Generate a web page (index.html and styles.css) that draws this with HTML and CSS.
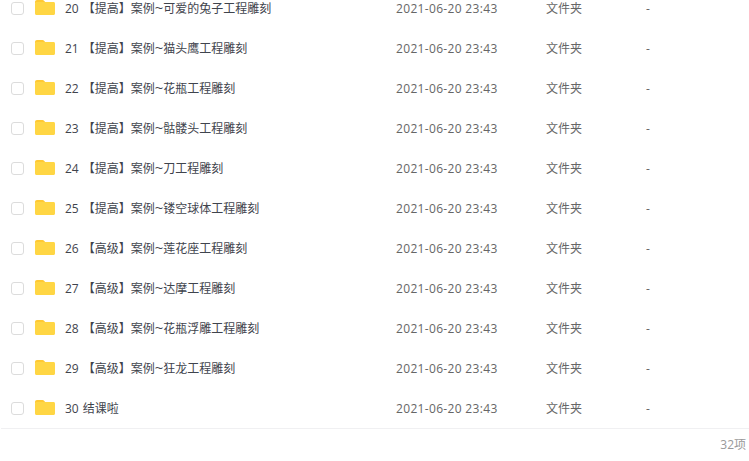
FILE: index.html
```html
<!DOCTYPE html>
<html lang="zh-CN">
<head>
    <meta charset="UTF-8">
    <meta name="viewport" content="width=device-width, initial-scale=1.0">
    <title>文件列表</title>
    <link rel="stylesheet" href="styles.css">
</head>
<body>
    <svg class="sprite" width="0" height="0">
        <symbol id="folder" viewBox="0 0 20 15">
            <path fill="#ffc933" d="M0 2C0 .8.8 0 2 0h5.500c.7 0 1.200.3 1.600.8L11 3H0z"/>
            <path fill="#ffd644" d="M0 3.500c0-.8.6-1.500 1.500-1.500h17c.9 0 1.500.7 1.500 1.500v10c0 .9-.6 1.500-1.500 1.500h-17C.6 15 0 14.400 0 13.500z"/>
        </symbol>
    </svg>

    <div class="list">
        <div class="row"><span class="check"></span><svg class="folder"><use href="#folder"/></svg><span class="name"><span class="num">20</span>【提高】案例<span class="tilde">~</span>可爱的兔子工程雕刻</span><span class="date">2021-06-20 23:43</span><span class="type">文件夹</span><span class="size">-</span></div>
        <div class="row"><span class="check"></span><svg class="folder"><use href="#folder"/></svg><span class="name"><span class="num">21</span>【提高】案例<span class="tilde">~</span>猫头鹰工程雕刻</span><span class="date">2021-06-20 23:43</span><span class="type">文件夹</span><span class="size">-</span></div>
        <div class="row"><span class="check"></span><svg class="folder"><use href="#folder"/></svg><span class="name"><span class="num">22</span>【提高】案例<span class="tilde">~</span>花瓶工程雕刻</span><span class="date">2021-06-20 23:43</span><span class="type">文件夹</span><span class="size">-</span></div>
        <div class="row"><span class="check"></span><svg class="folder"><use href="#folder"/></svg><span class="name"><span class="num">23</span>【提高】案例<span class="tilde">~</span>骷髅头工程雕刻</span><span class="date">2021-06-20 23:43</span><span class="type">文件夹</span><span class="size">-</span></div>
        <div class="row"><span class="check"></span><svg class="folder"><use href="#folder"/></svg><span class="name"><span class="num">24</span>【提高】案例<span class="tilde">~</span>刀工程雕刻</span><span class="date">2021-06-20 23:43</span><span class="type">文件夹</span><span class="size">-</span></div>
        <div class="row"><span class="check"></span><svg class="folder"><use href="#folder"/></svg><span class="name"><span class="num">25</span>【提高】案例<span class="tilde">~</span>镂空球体工程雕刻</span><span class="date">2021-06-20 23:43</span><span class="type">文件夹</span><span class="size">-</span></div>
        <div class="row"><span class="check"></span><svg class="folder"><use href="#folder"/></svg><span class="name"><span class="num">26</span>【高级】案例<span class="tilde">~</span>莲花座工程雕刻</span><span class="date">2021-06-20 23:43</span><span class="type">文件夹</span><span class="size">-</span></div>
        <div class="row"><span class="check"></span><svg class="folder"><use href="#folder"/></svg><span class="name"><span class="num">27</span>【高级】案例<span class="tilde">~</span>达摩工程雕刻</span><span class="date">2021-06-20 23:43</span><span class="type">文件夹</span><span class="size">-</span></div>
        <div class="row"><span class="check"></span><svg class="folder"><use href="#folder"/></svg><span class="name"><span class="num">28</span>【高级】案例<span class="tilde">~</span>花瓶浮雕工程雕刻</span><span class="date">2021-06-20 23:43</span><span class="type">文件夹</span><span class="size">-</span></div>
        <div class="row"><span class="check"></span><svg class="folder"><use href="#folder"/></svg><span class="name"><span class="num">29</span>【高级】案例<span class="tilde">~</span>狂龙工程雕刻</span><span class="date">2021-06-20 23:43</span><span class="type">文件夹</span><span class="size">-</span></div>
        <div class="row"><span class="check"></span><svg class="folder"><use href="#folder"/></svg><span class="name"><span class="num">30</span>结课啦</span><span class="date">2021-06-20 23:43</span><span class="type">文件夹</span><span class="size">-</span></div>
    </div>

    <div class="footer">32项</div>
</body>
</html>
```

FILE: styles.css
```css
/* Base styles */
html, body {
    height: 100%;
}
body {
    margin: 0;
    overflow: hidden;
    background: #fff;
    color: #3f444d;
    font-family: "Open Sans", "Noto Sans CJK SC", sans-serif;
    font-size: 12px;
}
.sprite {
    display: block;
}

/* File list */
.list {
    margin: -12px 0 0 1px;
    border-bottom: 1px solid #f0f0f2;
}
.row {
    display: flex;
    align-items: center;
    height: 40px;
    padding-left: 10px;
}
.check {
    box-sizing: border-box;
    width: 13px;
    height: 13px;
    margin-top: 1px;
    border: 1px solid #dcdcdc;
    border-radius: 3px;
}
.folder {
    width: 20px;
    height: 15px;
    margin: -1px 0 0 11px;
}
.name {
    width: 331px;
    margin-left: 10px;
    white-space: nowrap;
}
.num {
    margin-right: 4px;
}
.tilde {
    font-size: 15px;
    line-height: 0;
}
.date {
    width: 150px;
    color: #666;
    letter-spacing: 0.33px;
}
.type {
    width: 100px;
    color: #666;
}
.size {
    color: #666;
}

/* Footer */
.footer {
    padding: 6px 3px 0 0;
    color: #999;
    text-align: right;
}
```
